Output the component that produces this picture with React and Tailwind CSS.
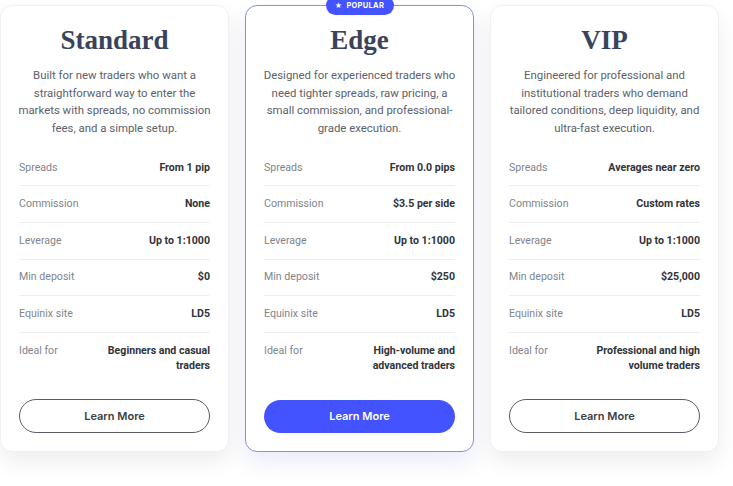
import React from "react";

const plans = [
  {
    name: "Standard",
    desc: "Built for new traders who want a straightforward way to enter the markets with spreads, no commission fees, and a simple setup.",
    rows: [
      ["Spreads", "From 1 pip"],
      ["Commission", "None"],
      ["Leverage", "Up to 1:1000"],
      ["Min deposit", "$0"],
      ["Equinix site", "LD5"],
    ],
    ideal: ["Beginners and casual", "traders"],
  },
  {
    name: "Edge",
    popular: true,
    desc: "Designed for experienced traders who need tighter spreads, raw pricing, a small commission, and professional-grade execution.",
    rows: [
      ["Spreads", "From 0.0 pips"],
      ["Commission", "$3.5 per side"],
      ["Leverage", "Up to 1:1000"],
      ["Min deposit", "$250"],
      ["Equinix site", "LD5"],
    ],
    ideal: ["High-volume and", "advanced traders"],
  },
  {
    name: "VIP",
    desc: "Engineered for professional and institutional traders who demand tailored conditions, deep liquidity, and ultra-fast execution.",
    rows: [
      ["Spreads", "Averages near zero"],
      ["Commission", "Custom rates"],
      ["Leverage", "Up to 1:1000"],
      ["Min deposit", "$25,000"],
      ["Equinix site", "LD5"],
    ],
    ideal: ["Professional and high", "volume traders"],
  },
];

function Card({ plan }) {
  const pop = plan.popular;
  return (
    <div
      className={
        "relative w-[229px] h-[447px] rounded-[12px] bg-white flex flex-col px-[18px] pt-[18px] pb-[18px] " +
        (pop
          ? "border border-[#8490e8] shadow-[0_10px_22px_rgba(80,90,200,0.12)]"
          : "border border-[#f1f1f3] shadow-[0_10px_22px_rgba(0,0,0,0.07)]")
      }
    >
      {pop && (
        <div className="absolute -top-[10px] left-1/2 -translate-x-1/2 h-[19px] w-[68px] rounded-full bg-[#4353ff] flex items-center justify-center gap-[4px] text-white text-[7.5px] font-bold tracking-[0.3px] font-['Inter',sans-serif]">
          <span className="text-[7px] leading-none">★</span>
          <span className="leading-none">POPULAR</span>
        </div>
      )}
      <h2 className="text-center text-[27px] leading-[32px] font-bold text-[#38435c] font-['Liberation_Serif',serif]">
        {plan.name}
      </h2>
      <p className="mt-[11px] -mx-[4px] text-center text-[11.4px] leading-[17.7px] text-[#5c616b] font-['Roboto',sans-serif]">
        {plan.desc}
      </p>
      <div className="mt-[12px] flex flex-col font-['Roboto',sans-serif] text-[10.6px]">
        {plan.rows.map(([k, v]) => (
          <div
            key={k}
            className="h-[36.6px] flex items-center justify-between border-b border-[#efefef]"
          >
            <span className="text-[#80848c]">{k}</span>
            <span className="font-bold text-[#30333a]">{v}</span>
          </div>
        ))}
        <div className="flex justify-between pt-[10px] leading-[15px]">
          <span className="text-[#80848c]">Ideal for</span>
          <span className="font-bold text-[#30333a] text-right">
            {plan.ideal[0]}
            <br />
            {plan.ideal[1]}
          </span>
        </div>
      </div>
      <div className="mt-auto">
        {pop ? (
          <button className="w-full h-[33px] rounded-full bg-[#4353ff] text-white text-[11px] font-semibold font-['Inter',sans-serif]">
            Learn More
          </button>
        ) : (
          <button className="w-full h-[34px] rounded-full border border-[#5a5d66] bg-white text-[#3a3d45] text-[11px] font-semibold font-['Inter',sans-serif]">
            Learn More
          </button>
        )}
      </div>
    </div>
  );
}

export default function App() {
  return (
    <div className="w-[733px] h-[486px] bg-white overflow-hidden">
      <div className="flex gap-[16px] pt-[5px]">
        {plans.map((p) => (
          <Card key={p.name} plan={p} />
        ))}
      </div>
    </div>
  );
}
